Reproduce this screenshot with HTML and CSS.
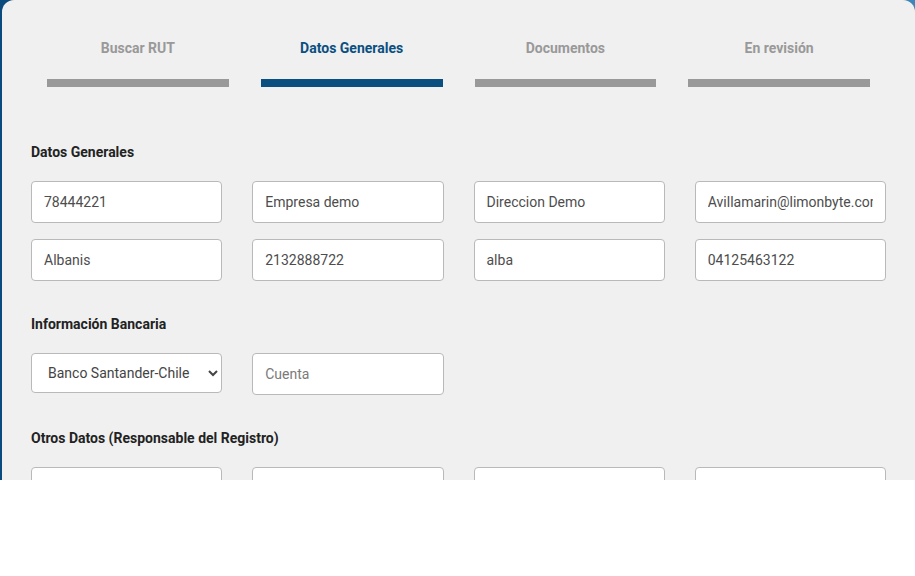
FILE: index.html
```html
<!DOCTYPE html>
<html lang="es">
<head>
<meta charset="utf-8">
<title>Registro</title>
<link rel="stylesheet" href="styles.css">
</head>
<body>
<div class="frame">
  <div class="card">
    <div class="stepper">
      <div class="step"><span class="step-label">Buscar RUT</span><span class="step-bar"></span></div>
      <div class="step active"><span class="step-label">Datos Generales</span><span class="step-bar"></span></div>
      <div class="step"><span class="step-label">Documentos</span><span class="step-bar"></span></div>
      <div class="step"><span class="step-label">En revisión</span><span class="step-bar"></span></div>
    </div>

    <h3 class="section-title first">Datos Generales</h3>
    <div class="grid">
      <input class="field" type="text" value="78444221">
      <input class="field" type="text" value="Empresa demo">
      <input class="field" type="text" value="Direccion Demo">
      <input class="field" type="text" value="Avillamarin@limonbyte.com">
      <input class="field" type="text" value="Albanis">
      <input class="field" type="text" value="2132888722">
      <input class="field" type="text" value="alba">
      <input class="field" type="text" value="04125463122">
    </div>

    <h3 class="section-title">Información Bancaria</h3>
    <div class="grid">
      <select class="field select">
        <option>Banco Santander-Chile</option>
      </select>
      <input class="field" type="text" placeholder="Cuenta">
    </div>

    <h3 class="section-title">Otros Datos (Responsable del Registro)</h3>
    <div class="grid">
      <input class="field" type="text">
      <input class="field" type="text">
      <input class="field" type="text">
      <input class="field" type="text">
    </div>
  </div>
</div>
</body>
</html>
```

FILE: styles.css
```css
html, body {
  margin: 0;
  padding: 0;
  background: #ffffff;
}

body {
  font-family: Roboto, "Liberation Sans", Arial, sans-serif;
}

.frame {
  height: 480px;
  overflow: hidden;
  background: linear-gradient(90deg, #0b4a7c 0%, #1f6aa0 60%, #3d86b9 100%);
  padding-left: 2px;
}

.card {
  background: #f0f0f0;
  border-radius: 12px 12px 0 0;
  min-height: 600px;
  padding: 40px 29px 0 29px;
  box-sizing: border-box;
}

.stepper {
  display: grid;
  grid-template-columns: repeat(4, 1fr);
  column-gap: 32px;
  padding: 0 16px;
}

.step {
  display: flex;
  flex-direction: column;
  align-items: center;
}

.step-label {
  font-size: 14px;
  line-height: 16px;
  font-weight: 700;
  color: #999999;
}

.step-bar {
  display: block;
  width: 100%;
  height: 8px;
  margin-top: 23px;
  background: #999999;
}

.step.active .step-label {
  color: #0a4f80;
}

.step.active .step-bar {
  background: #0a4f80;
}

.section-title {
  margin: 35px 0 21px 0;
  font-size: 14px;
  line-height: 16px;
  font-weight: 700;
  color: #222222;
}

.section-title.first {
  margin-top: 57px;
}

.grid {
  display: grid;
  grid-template-columns: repeat(4, 1fr);
  column-gap: 30px;
  row-gap: 16px;
  align-items: start;
}

.field {
  box-sizing: border-box;
  width: 100%;
  height: 42px;
  margin: 0;
  padding: 0 12px;
  border: 1px solid #b9b9b9;
  border-radius: 4px;
  background: #ffffff;
  font-family: Roboto, "Liberation Sans", Arial, sans-serif;
  font-size: 14px;
  color: #4d4d4d;
  outline: none;
}

.field::placeholder {
  color: #7a7a7a;
}

.select {
  height: 40px;
  padding: 0 10px 0 12px;
  color: #444444;
}
```
